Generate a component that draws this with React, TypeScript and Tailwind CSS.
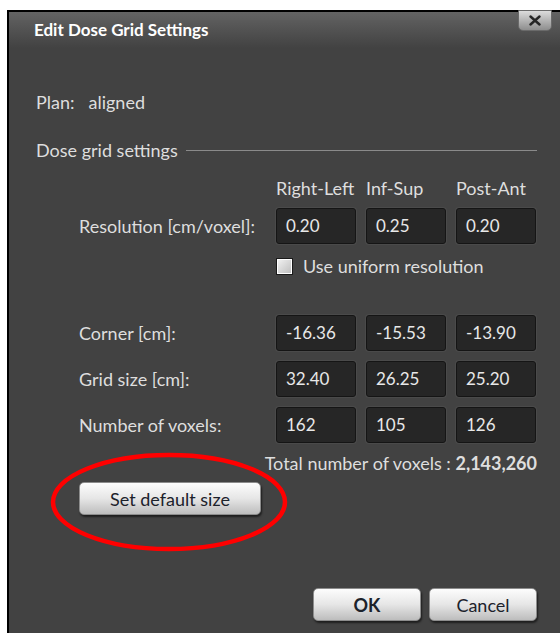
import { useState } from 'react'

const font = { fontFamily: 'Lato, "Open Sans", sans-serif' }

type Row = { label: string; values: string[] }

const gridRows: Row[] = [
  { label: 'Corner [cm]:', values: ['-16.36', '-15.53', '-13.90'] },
  { label: 'Grid size [cm]:', values: ['32.40', '26.25', '25.20'] },
  { label: 'Number of voxels:', values: ['162', '105', '126'] },
]

function Field({ value }: { value: string }) {
  return (
    <div className="h-[36px] w-[80px] rounded-[3px] border border-[#151515] bg-[#262626] pl-[9px] text-[17px] leading-[34px] text-[#e8e8e8] shadow-[0_0_0_1px_#4a4a4a]">
      {value}
    </div>
  )
}

function GreyButton({ label, className }: { label: string; className: string }) {
  return (
    <button
      type="button"
      className={
        'h-[33px] rounded-[5px] border border-[#8c8c8c] bg-gradient-to-b from-[#fdfdfd] via-[#e6e6e6] to-[#bdbdbd] text-[18px] leading-none text-[#1c222b] shadow-[1px_2px_2px_rgba(0,0,0,0.55)] ' +
        className
      }
    >
      {label}
    </button>
  )
}

function App() {
  const [uniform, setUniform] = useState(false)

  return (
    <div className="relative h-[633px] w-[560px] overflow-hidden bg-white pl-[7px] pt-[10px]" style={font}>
      <div className="relative flex h-full flex-col border-l-2 border-t-2 border-black bg-[#424242] text-[#dedede]">
        {/* title bar */}
        <div className="flex h-[36px] items-center bg-gradient-to-b from-[#636363] to-[#424242] pl-[25px]">
          <span className="text-[17px] font-bold text-white">Edit Dose Grid Settings</span>
        </div>
        <button
          type="button"
          className="absolute -top-[2px] right-[8px] flex h-[21px] w-[34px] items-center justify-center rounded-b-[5px] border border-[#6a6a6a] bg-gradient-to-b from-[#dcdcdc] to-[#8e8e8e]"
        >
          <svg width="12" height="11" viewBox="0 0 12 11">
            <path d="M1.5 1.5 L10.5 9.5 M10.5 1.5 L1.5 9.5" stroke="#262626" strokeWidth="2.4" strokeLinecap="round" />
          </svg>
        </button>

        <div className="flex flex-1 flex-col pl-[27px] pr-[23px] text-[18px] leading-[20px]">
          <div className="mt-[44px] flex gap-[14px]">
            <span>Plan:</span>
            <span>aligned</span>
          </div>

          <div className="mt-[28px] flex items-center gap-[8px]">
            <span>Dose grid settings</span>
            <div className="h-px flex-1 bg-[#8a8a8a]" />
          </div>

          <div className="mt-[18px] grid grid-cols-[187px_80px_80px_80px] gap-x-[10px] pl-[43px]">
            <div />
            <span>Right-Left</span>
            <span>Inf-Sup</span>
            <span>Post-Ant</span>

            <div className="mt-[10px] flex h-[36px] items-center">Resolution [cm/voxel]:</div>
            <div className="mt-[10px]"><Field value="0.20" /></div>
            <div className="mt-[10px]"><Field value="0.25" /></div>
            <div className="mt-[10px]"><Field value="0.20" /></div>

            <div />
            <label className="col-span-3 mt-[12px] flex cursor-pointer items-center gap-[10px]">
              <span
                onClick={() => setUniform(!uniform)}
                className="flex h-[17px] w-[17px] items-center justify-center border border-[#1a1a1a] bg-gradient-to-br from-[#f4f4f4] to-[#bcbcbc] shadow-[inset_0_0_0_1px_#ffffff]"
              >
                {uniform && <span className="text-[12px] leading-none text-black">✓</span>}
              </span>
              <span>Use uniform resolution</span>
            </label>

            {gridRows.map((row, i) => (
              <div key={row.label} className="contents">
                <div className={(i === 0 ? 'mt-[39px]' : 'mt-[10px]') + ' flex h-[36px] items-center'}>{row.label}</div>
                {row.values.map((v, j) => (
                  <div key={j} className={i === 0 ? 'mt-[39px]' : 'mt-[10px]'}>
                    <Field value={v} />
                  </div>
                ))}
              </div>
            ))}
          </div>

          <div className="mt-[10px] text-right">
            Total number of voxels : <span className="font-bold">2,143,260</span>
          </div>

          <div className="mt-[9px] pl-[43px]">
            <GreyButton label="Set default size" className="w-[182px]" />
          </div>

          <div className="mt-auto mb-[12px] flex justify-end gap-[8px]">
            <GreyButton label="OK" className="w-[108px] font-bold" />
            <GreyButton label="Cancel" className="w-[108px]" />
          </div>
        </div>
      </div>

      {/* red ring drawn around the default-size button */}
      <svg className="pointer-events-none absolute left-0 top-0" width="560" height="633">
        <ellipse cx="169" cy="502" rx="116" ry="47" fill="none" stroke="#ff0000" strokeWidth="4.5" />
      </svg>
    </div>
  )
}

export default App
